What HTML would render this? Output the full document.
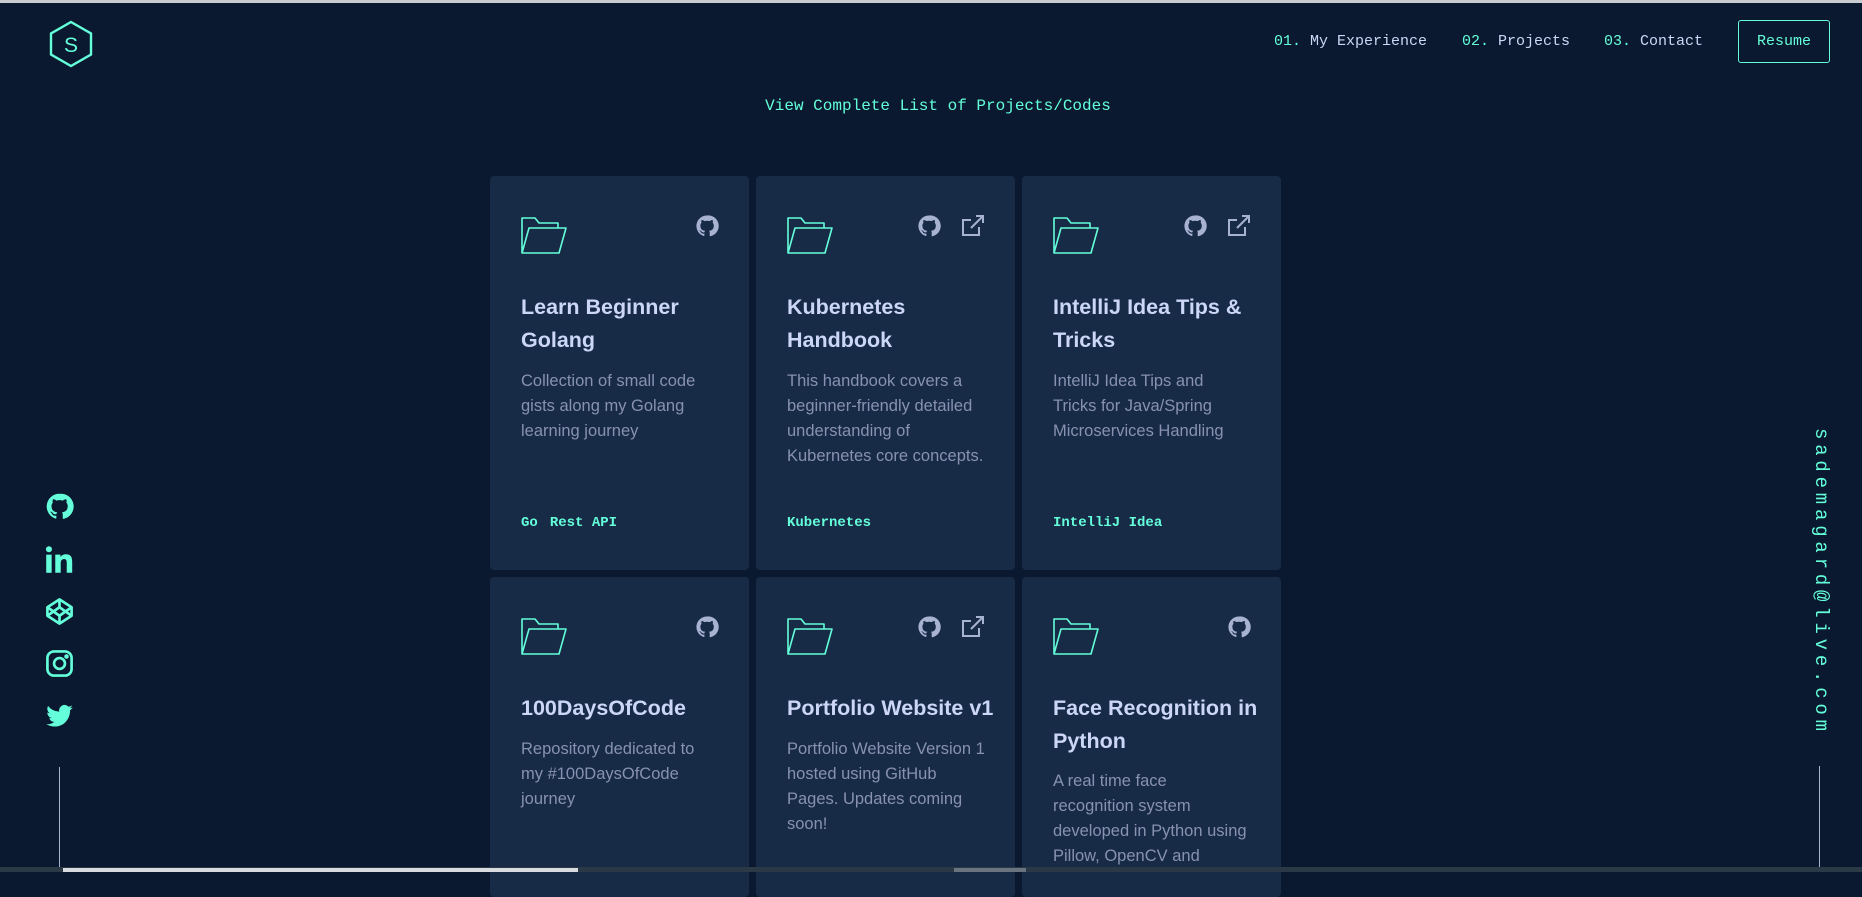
<!DOCTYPE html>
<html><head><meta charset="utf-8"><style>
*{margin:0;padding:0;box-sizing:border-box}
body{width:1862px;height:872px;overflow:hidden;background:#0a192f;position:relative;font-family:"Liberation Sans",sans-serif}
.mono{font-family:"Liberation Mono",monospace}
.topbar{position:absolute;left:0;top:0;width:1862px;height:3px;background:#c8ccd0}
.nav{position:absolute;top:33px;font-size:15px;color:#ccd6f6}
.nav span{color:#64ffda}
.resume{position:absolute;left:1738px;top:20px;width:92px;height:43px;border:1.5px solid #64ffda;border-radius:3px;color:#64ffda;font-size:15px;display:flex;align-items:center;justify-content:center}
.view{position:absolute;left:0;width:1880px;top:97px;text-align:center;color:#64ffda;font-size:16px}
.card{position:absolute;width:259px;background:#172a46;border-radius:4px;padding:0 31px}
.folder{position:absolute;left:31px;top:40px}
.gh{position:absolute;top:38px}
.title{position:absolute;left:31px;right:20px;top:115px;color:#ccd6f6;font-weight:bold;font-size:21.5px;line-height:33px}
.desc{position:absolute;left:31px;color:#8892b0;font-size:16.5px;line-height:25px;white-space:nowrap}
.tags{position:absolute;left:31px;top:339px;color:#64ffda;font-size:14px;font-weight:bold}
.tags i{font-style:normal;margin-right:12px}
.soc{position:absolute;left:45px}
.vline{position:absolute;width:1px;background:#a8b2d1}
.email{position:absolute;left:1810px;top:428px;writing-mode:vertical-rl;color:#64ffda;font-size:19px;letter-spacing:4.8px}
</style></head><body>
<div class="topbar"></div>
<svg style="position:absolute;left:48px;top:20px" width="46" height="48" viewBox="0 0 46 48"><polygon points="23,2 43,13.5 43,34.5 23,46 3,34.5 3,13.5" fill="none" stroke="#64ffda" stroke-width="2.4"/><text x="23" y="32" text-anchor="middle" fill="#64ffda" font-family="Liberation Sans" font-size="21">S</text></svg>
<div class="nav mono" style="left:1274px"><span>01.</span> My Experience</div>
<div class="nav mono" style="left:1462px"><span>02.</span> Projects</div>
<div class="nav mono" style="left:1604px"><span>03.</span> Contact</div>
<div class="resume mono">Resume</div>
<div class="view mono" style="left:0;width:1876px">View Complete List of Projects/Codes</div>

<div class="card" style="left:490px;top:176px;height:394px">
 <svg class="folder" width="46" height="40" viewBox="0 0 46 40"><path d="M1 37V2h13l4 5h19v5M1 37l7-25h37l-7 25z" fill="none" stroke="#64ffda" stroke-width="1.6" stroke-linejoin="round"/></svg>
 <svg class="gh" style="left:205px" width="24" height="24" viewBox="0 0 24 24"><path d="M12 1.5a10.5 10.5 0 0 0-3.3 20.5c.5.1.7-.2.7-.5v-2c-2.9.6-3.5-1.2-3.5-1.2-.5-1.2-1.2-1.5-1.2-1.5-.9-.6.1-.6.1-.6 1 .1 1.6 1.1 1.6 1.1.9 1.6 2.5 1.1 3.1.9.1-.7.4-1.1.7-1.400-2.3-.3-4.8-1.2-4.8-5.2 0-1.1.4-2.1 1.1-2.8-.1-.3-.5-1.3.1-2.8 0 0 .9-.3 2.9 1.1a10 10 0 0 1 5.2 0c2-1.4 2.9-1.1 2.9-1.1.6 1.5.2 2.5.1 2.8.7.7 1.1 1.7 1.1 2.8 0 4-2.5 4.9-4.8 5.2.4.3.7 1 .7 2v2.9c0 .3.2.6.7.5A10.5 10.5 0 0 0 12 1.5z" fill="#a8b2d1"/></svg>
 <div class="title">Learn Beginner Golang</div>
 <div class="desc" style="top:193px">Collection of small code<br>gists along my Golang<br>learning journey</div>
 <div class="tags mono"><i>Go</i><i>Rest API</i></div>
</div>
<div class="card" style="left:756px;top:176px;height:394px">
 <svg class="folder" width="46" height="40" viewBox="0 0 46 40"><path d="M1 37V2h13l4 5h19v5M1 37l7-25h37l-7 25z" fill="none" stroke="#64ffda" stroke-width="1.6" stroke-linejoin="round"/></svg>
 <svg class="gh" style="left:161px" width="24" height="24" viewBox="0 0 24 24"><path d="M12 1.5a10.5 10.5 0 0 0-3.3 20.5c.5.1.7-.2.7-.5v-2c-2.9.6-3.5-1.2-3.5-1.2-.5-1.2-1.2-1.5-1.2-1.5-.9-.6.1-.6.1-.6 1 .1 1.6 1.1 1.6 1.1.9 1.6 2.5 1.1 3.1.9.1-.7.4-1.1.7-1.4-2.3-.3-4.8-1.2-4.8-5.2 0-1.1.4-2.1 1.1-2.8-.1-.3-.5-1.3.1-2.8 0 0 .9-.3 2.9 1.1a10 10 0 0 1 5.2 0c2-1.4 2.9-1.1 2.9-1.1.6 1.5.2 2.5.1 2.8.7.7 1.1 1.7 1.1 2.8 0 4-2.5 4.9-4.8 5.2.4.3.7 1 .7 2v2.9c0 .3.2.6.7.5A10.5 10.5 0 0 0 12 1.5z" fill="#a8b2d1"/></svg>
 <svg class="gh" style="left:205px" width="24" height="24" viewBox="0 0 24 24"><path d="M18 13v8H2V6h8M15 2h7v7M10 14L22 2" fill="none" stroke="#a8b2d1" stroke-width="2"/></svg>
 <div class="title">Kubernetes Handbook</div>
 <div class="desc" style="top:193px">This handbook covers a<br>beginner-friendly detailed<br>understanding of<br>Kubernetes core concepts.</div>
 <div class="tags mono"><i>Kubernetes</i></div>
</div>
<div class="card" style="left:1022px;top:176px;height:394px">
 <svg class="folder" width="46" height="40" viewBox="0 0 46 40"><path d="M1 37V2h13l4 5h19v5M1 37l7-25h37l-7 25z" fill="none" stroke="#64ffda" stroke-width="1.6" stroke-linejoin="round"/></svg>
 <svg class="gh" style="left:161px" width="24" height="24" viewBox="0 0 24 24"><path d="M12 1.5a10.5 10.5 0 0 0-3.3 20.5c.5.1.7-.2.7-.5v-2c-2.9.6-3.5-1.2-3.5-1.2-.5-1.2-1.2-1.5-1.2-1.5-.9-.6.1-.6.1-.6 1 .1 1.6 1.1 1.6 1.1.9 1.6 2.5 1.1 3.1.9.1-.7.4-1.1.7-1.4-2.3-.3-4.8-1.2-4.8-5.2 0-1.1.4-2.1 1.1-2.8-.1-.3-.5-1.3.1-2.8 0 0 .9-.3 2.9 1.1a10 10 0 0 1 5.2 0c2-1.4 2.9-1.1 2.9-1.1.6 1.5.2 2.5.1 2.8.7.7 1.1 1.7 1.1 2.8 0 4-2.5 4.9-4.8 5.2.4.3.7 1 .7 2v2.9c0 .3.2.6.7.5A10.5 10.5 0 0 0 12 1.5z" fill="#a8b2d1"/></svg>
 <svg class="gh" style="left:205px" width="24" height="24" viewBox="0 0 24 24"><path d="M18 13v8H2V6h8M15 2h7v7M10 14L22 2" fill="none" stroke="#a8b2d1" stroke-width="2"/></svg>
 <div class="title">IntelliJ Idea Tips &amp; Tricks</div>
 <div class="desc" style="top:193px">IntelliJ Idea Tips and<br>Tricks for Java/Spring<br>Microservices Handling</div>
 <div class="tags mono"><i>IntelliJ Idea</i></div>
</div>
<div class="card" style="left:490px;top:577px;height:320px">
 <svg class="folder" width="46" height="40" viewBox="0 0 46 40"><path d="M1 37V2h13l4 5h19v5M1 37l7-25h37l-7 25z" fill="none" stroke="#64ffda" stroke-width="1.6" stroke-linejoin="round"/></svg>
 <svg class="gh" style="left:205px" width="24" height="24" viewBox="0 0 24 24"><path d="M12 1.5a10.5 10.5 0 0 0-3.3 20.5c.5.1.7-.2.7-.5v-2c-2.9.6-3.5-1.2-3.5-1.2-.5-1.2-1.2-1.5-1.2-1.5-.9-.6.1-.6.1-.6 1 .1 1.6 1.1 1.6 1.1.9 1.6 2.5 1.1 3.1.9.1-.7.4-1.1.7-1.4-2.3-.3-4.8-1.2-4.8-5.2 0-1.1.4-2.1 1.1-2.8-.1-.3-.5-1.3.1-2.8 0 0 .9-.3 2.9 1.1a10 10 0 0 1 5.2 0c2-1.4 2.9-1.1 2.9-1.1.6 1.5.2 2.5.1 2.8.7.7 1.1 1.7 1.1 2.8 0 4-2.5 4.9-4.8 5.2.4.3.7 1 .7 2v2.9c0 .3.2.6.7.5A10.5 10.5 0 0 0 12 1.5z" fill="#a8b2d1"/></svg>
 <div class="title">100DaysOfCode</div>
 <div class="desc" style="top:160px">Repository dedicated to<br>my #100DaysOfCode<br>journey</div>
</div>
<div class="card" style="left:756px;top:577px;height:320px">
 <svg class="folder" width="46" height="40" viewBox="0 0 46 40"><path d="M1 37V2h13l4 5h19v5M1 37l7-25h37l-7 25z" fill="none" stroke="#64ffda" stroke-width="1.6" stroke-linejoin="round"/></svg>
 <svg class="gh" style="left:161px" width="24" height="24" viewBox="0 0 24 24"><path d="M12 1.5a10.5 10.5 0 0 0-3.3 20.5c.5.1.7-.2.7-.5v-2c-2.9.6-3.5-1.2-3.5-1.2-.5-1.2-1.2-1.5-1.2-1.5-.9-.6.1-.6.1-.6 1 .1 1.6 1.1 1.6 1.1.9 1.6 2.5 1.1 3.1.9.1-.7.4-1.1.7-1.4-2.3-.3-4.8-1.2-4.8-5.2 0-1.1.4-2.1 1.1-2.8-.1-.3-.5-1.3.1-2.8 0 0 .9-.3 2.9 1.1a10 10 0 0 1 5.2 0c2-1.4 2.9-1.1 2.9-1.1.6 1.5.2 2.5.1 2.8.7.7 1.1 1.7 1.1 2.8 0 4-2.5 4.9-4.8 5.2.4.3.7 1 .7 2v2.9c0 .3.2.6.7.5A10.5 10.5 0 0 0 12 1.5z" fill="#a8b2d1"/></svg>
 <svg class="gh" style="left:205px" width="24" height="24" viewBox="0 0 24 24"><path d="M18 13v8H2V6h8M15 2h7v7M10 14L22 2" fill="none" stroke="#a8b2d1" stroke-width="2"/></svg>
 <div class="title">Portfolio Website v1</div>
 <div class="desc" style="top:160px">Portfolio Website Version 1<br>hosted using GitHub<br>Pages. Updates coming<br>soon!</div>
</div>
<div class="card" style="left:1022px;top:577px;height:320px">
 <svg class="folder" width="46" height="40" viewBox="0 0 46 40"><path d="M1 37V2h13l4 5h19v5M1 37l7-25h37l-7 25z" fill="none" stroke="#64ffda" stroke-width="1.6" stroke-linejoin="round"/></svg>
 <svg class="gh" style="left:205px" width="24" height="24" viewBox="0 0 24 24"><path d="M12 1.5a10.5 10.5 0 0 0-3.3 20.5c.5.1.7-.2.7-.5v-2c-2.9.6-3.5-1.2-3.5-1.2-.5-1.2-1.2-1.5-1.2-1.5-.9-.6.1-.6.1-.6 1 .1 1.6 1.1 1.6 1.1.9 1.6 2.5 1.1 3.1.9.1-.7.4-1.1.7-1.4-2.3-.3-4.8-1.2-4.8-5.2 0-1.1.4-2.1 1.1-2.8-.1-.3-.5-1.3.1-2.8 0 0 .9-.3 2.9 1.1a10 10 0 0 1 5.2 0c2-1.4 2.9-1.1 2.9-1.1.6 1.5.2 2.5.1 2.8.7.7 1.1 1.7 1.1 2.8 0 4-2.5 4.9-4.8 5.2.4.3.7 1 .7 2v2.9c0 .3.2.6.7.5A10.5 10.5 0 0 0 12 1.5z" fill="#a8b2d1"/></svg>
 <div class="title">Face Recognition in Python</div>
 <div class="desc" style="top:192px">A real time face<br>recognition system<br>developed in Python using<br>Pillow, OpenCV and</div>
</div>

<svg class="soc" style="top:492px" width="29" height="29" viewBox="0 0 24 24"><path d="M12 1.5a10.5 10.5 0 0 0-3.3 20.5c.5.1.7-.2.7-.5v-2c-2.9.6-3.5-1.2-3.5-1.2-.5-1.2-1.2-1.5-1.2-1.5-.9-.6.1-.6.1-.6 1 .1 1.6 1.1 1.6 1.1.9 1.6 2.5 1.1 3.1.9.1-.7.4-1.1.7-1.4-2.3-.3-4.8-1.2-4.8-5.2 0-1.1.4-2.1 1.1-2.8-.1-.3-.5-1.3.1-2.8 0 0 .9-.3 2.9 1.1a10 10 0 0 1 5.2 0c2-1.4 2.9-1.1 2.9-1.1.6 1.5.2 2.5.1 2.8.7.7 1.1 1.7 1.1 2.8 0 4-2.5 4.9-4.8 5.2.4.3.7 1 .7 2v2.9c0 .3.2.6.7.5A10.5 10.5 0 0 0 12 1.5z" fill="#64ffda"/></svg>
<svg class="soc" style="top:545px" width="29" height="29" viewBox="0 0 24 24"><rect x="1" y="8" width="4.5" height="15" fill="#64ffda"/><circle cx="3.25" cy="3.5" r="2.5" fill="#64ffda"/><path d="M8.5 8h4.3v2.1c.7-1.3 2.3-2.4 4.5-2.4 4.3 0 5.2 2.7 5.2 6.3V23h-4.5v-7.9c0-1.9-.2-3.5-2.2-3.5s-2.8 1.5-2.8 3.4V23H8.5z" fill="#64ffda"/></svg>
<svg class="soc" style="top:597px" width="29" height="29" viewBox="0 0 24 24" fill="none" stroke="#64ffda" stroke-width="2.2" stroke-linejoin="round"><path d="M12 2l10 6.5v7L12 22 2 15.5v-7z"/><path d="M12 22v-6.5M22 8.5l-10 7-10-7M2 15.5l10-7 10 7M12 2v6.5"/></svg>
<svg class="soc" style="top:649px" width="29" height="29" viewBox="0 0 24 24" fill="none" stroke="#64ffda" stroke-width="2.2"><rect x="2" y="2" width="20" height="20" rx="5.5"/><circle cx="12" cy="12" r="4.5"/><circle cx="17.8" cy="6.2" r=".8" fill="#64ffda"/></svg>
<svg class="soc" style="top:702px" width="29" height="29" viewBox="0 0 24 24"><path d="M23 4.6a9 9 0 0 1-2.6.7 4.5 4.5 0 0 0 2-2.5 9 9 0 0 1-2.9 1.1 4.5 4.5 0 0 0-7.7 4.1A12.8 12.8 0 0 1 2.5 3.3a4.5 4.5 0 0 0 1.4 6 4.5 4.5 0 0 1-2-.6v.1a4.5 4.5 0 0 0 3.6 4.4 4.5 4.5 0 0 1-2 .1 4.5 4.5 0 0 0 4.2 3.1A9 9 0 0 1 1 18.3a12.8 12.8 0 0 0 6.9 2c8.300 0 12.8-6.9 12.8-12.8v-.6A9.1 9.1 0 0 0 23 4.6z" fill="#64ffda"/></svg>
<div class="vline" style="left:59px;top:767px;height:105px"></div>

<div class="email mono">sademagard@live.com</div>
<div class="vline" style="left:1819px;top:766px;height:106px"></div>

<div style="position:absolute;left:0;top:867px;width:1862px;height:5px;background:#2b3845"></div>
<div style="position:absolute;left:63px;top:868px;width:515px;height:4px;background:#d8dce0"></div>
<div style="position:absolute;left:954px;top:868px;width:72px;height:4px;background:#6a7480"></div>
</body></html>
